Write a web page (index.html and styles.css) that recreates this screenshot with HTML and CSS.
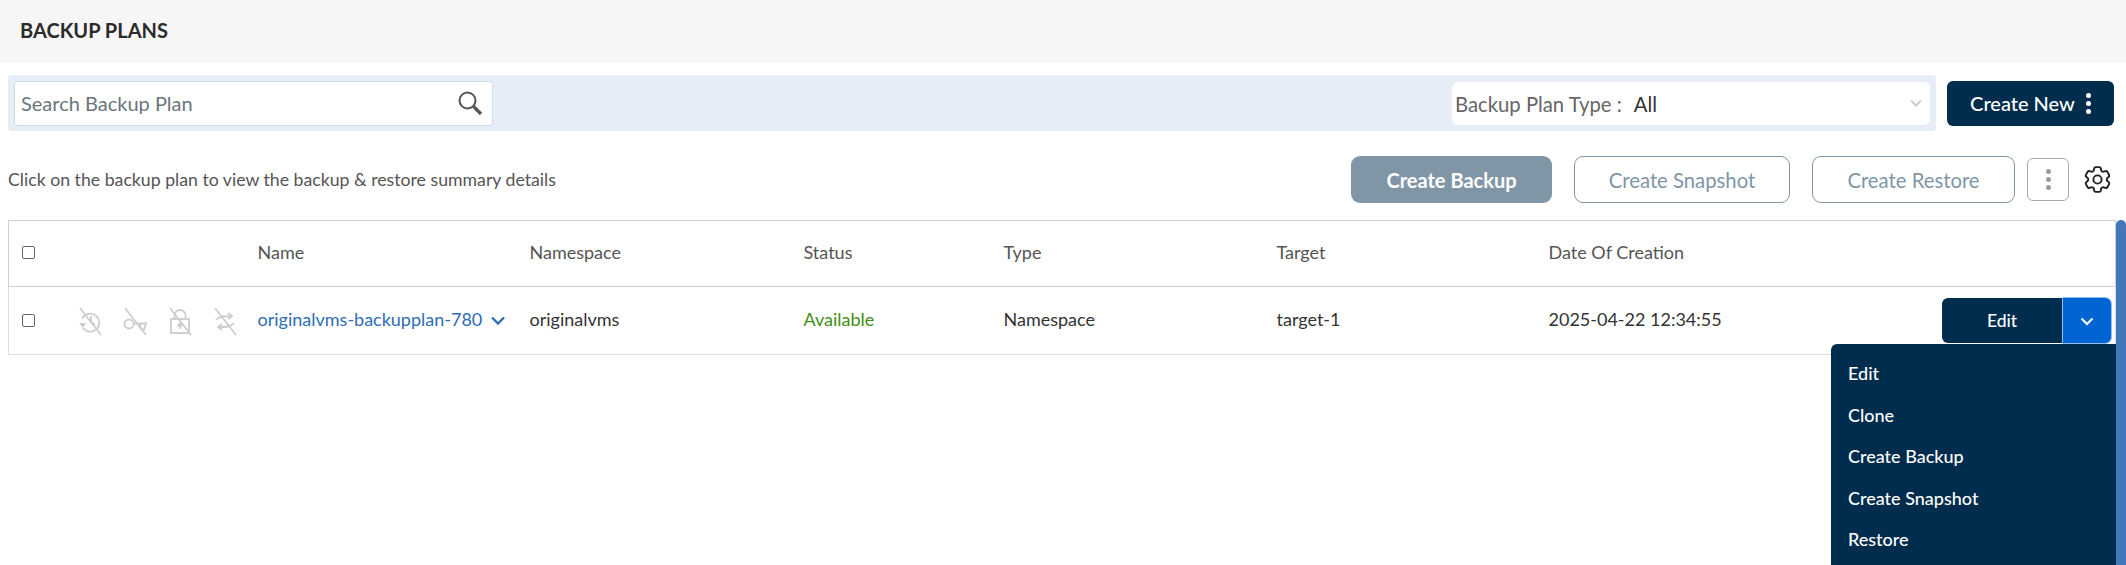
FILE: index.html
```html
<!DOCTYPE html>
<html lang="en">
<head>
    <meta charset="UTF-8">
    <title>Backup Plans</title>
    <link rel="stylesheet" href="styles.css">
</head>
<body>
    <header class="page-header">
        <h1>BACKUP PLANS</h1>
    </header>

    <div class="toolbar">
        <div class="filter-bar">
            <div class="search-box">
                <span>Search Backup Plan</span>
                <svg width="26" height="26" viewBox="0 0 26 26" fill="none" stroke="#555" stroke-width="2">
                    <circle cx="10.5" cy="10.5" r="8"/>
                    <path d="M16.5 16.5l7.5 7.5" stroke-width="3.2"/>
                </svg>
            </div>
            <div class="type-select">
                <span class="type-label">Backup Plan Type :</span>
                <span class="type-value">All</span>
                <svg class="type-arrow" width="14" height="9" viewBox="0 0 14 9" fill="none" stroke="#c9cdd2" stroke-width="2">
                    <path d="M2 1.5l5 5 5-5"/>
                </svg>
            </div>
        </div>
        <button class="btn-create-new">Create New <span class="dots light"><i></i><i></i><i></i></span></button>
    </div>

    <div class="action-row">
        <p class="hint">Click on the backup plan to view the backup &amp; restore summary details</p>
        <div class="actions">
            <button class="btn btn-filled">Create Backup</button>
            <button class="btn btn-outline snapshot">Create Snapshot</button>
            <button class="btn btn-outline restore">Create Restore</button>
            <button class="btn-kebab"><span class="dots"><i></i><i></i><i></i></span></button>
            <svg class="gear" width="33" height="33" viewBox="0 0 24 24" fill="none" stroke="#222" stroke-width="1.4" stroke-linejoin="round">
                <path d="M9.594 3.94c.09-.542.56-.94 1.11-.94h2.593c.55 0 1.02.398 1.11.94l.213 1.281c.063.374.313.686.645.87.074.04.147.083.22.127.324.196.72.257 1.075.124l1.217-.456a1.125 1.125 0 011.37.49l1.296 2.247a1.125 1.125 0 01-.26 1.431l-1.003.827c-.293.24-.438.613-.431.992a6.759 6.759 0 010 .255c-.007.378.138.75.43.99l1.005.828c.424.35.534.954.26 1.43l-1.298 2.247a1.125 1.125 0 01-1.369.491l-1.217-.456c-.355-.133-.75-.072-1.076.124a6.57 6.57 0 01-.22.128c-.331.183-.581.495-.644.869l-.213 1.28c-.09.543-.56.941-1.11.941h-2.594c-.55 0-1.02-.398-1.11-.94l-.213-1.281c-.062-.374-.312-.686-.644-.87a6.52 6.52 0 01-.22-.127c-.325-.196-.72-.257-1.076-.124l-1.217.456a1.125 1.125 0 01-1.369-.49l-1.297-2.247a1.125 1.125 0 01.26-1.431l1.004-.827c.292-.24.437-.613.43-.992a6.932 6.932 0 010-.255c.007-.378-.138-.75-.43-.99l-1.004-.828a1.125 1.125 0 01-.26-1.43l1.297-2.247a1.125 1.125 0 011.37-.491l1.216.456c.356.133.751.072 1.076-.124.072-.044.146-.087.22-.128.332-.183.582-.495.644-.869l.214-1.281z"/>
                <path d="M15 12a3 3 0 11-6 0 3 3 0 016 0z"/>
            </svg>
        </div>
    </div>

    <table class="plans">
        <colgroup>
            <col class="col-check">
            <col class="col-icons">
            <col class="col-name">
            <col class="col-ns">
            <col class="col-status">
            <col class="col-type">
            <col class="col-target">
            <col class="col-date">
            <col>
        </colgroup>
        <thead>
            <tr>
                <th><span class="check"></span></th>
                <th></th>
                <th class="text-cell">Name</th>
                <th class="text-cell">Namespace</th>
                <th class="text-cell">Status</th>
                <th class="text-cell">Type</th>
                <th class="text-cell">Target</th>
                <th class="text-cell">Date Of Creation</th>
                <th></th>
            </tr>
        </thead>
        <tbody>
            <tr>
                <td><span class="check"></span></td>
                <td>
                    <div class="state-icons">
                        <svg width="26" height="30" viewBox="0 0 26 30" fill="none" stroke="#cdcdcd" stroke-width="1.8">
                            <path d="M5 13a9 9 0 1 1 1 9"/>
                            <path d="M2 17l4 5 3-5z" fill="#cdcdcd" stroke="none"/>
                            <path d="M14 10v6l4 3"/>
                            <path d="M3 2l21 27"/>
                        </svg>
                        <svg width="26" height="30" viewBox="0 0 26 30" fill="none" stroke="#cdcdcd" stroke-width="1.8">
                            <circle cx="7" cy="18" r="4.5"/>
                            <path d="M11.5 17.5H24l-2 6h-3l-1-5"/>
                            <path d="M3 2l21 27"/>
                        </svg>
                        <svg width="26" height="30" viewBox="0 0 26 30" fill="none" stroke="#cdcdcd" stroke-width="1.8">
                            <rect x="4" y="13" width="18" height="14"/>
                            <path d="M7.5 13V9.5a5.5 5.5 0 0 1 11 0V13"/>
                            <path d="M13 23v-4M10.5 20l2.5-2.5 2.5 2.5"/>
                            <path d="M3 2l21 27"/>
                        </svg>
                        <svg width="26" height="30" viewBox="0 0 26 30" fill="none" stroke="#cdcdcd" stroke-width="1.8">
                            <path d="M4 14c3-4 9-4 15-4M16 7l4 3-4 3"/>
                            <path d="M22 17c-3 4-9 4-15 4M10 18l-4 3 4 3"/>
                            <path d="M3 2l21 27"/>
                        </svg>
                    </div>
                </td>
                <td class="text-cell">
                    <a class="plan-link">originalvms-backupplan-780
                        <svg width="16" height="10" viewBox="0 0 16 10" fill="none" stroke="#2f6db5" stroke-width="2.4"><path d="M2 1.5l6 6 6-6"/></svg>
                    </a>
                </td>
                <td class="text-cell">originalvms</td>
                <td class="text-cell available">Available</td>
                <td class="text-cell">Namespace</td>
                <td class="text-cell">target-1</td>
                <td class="text-cell">2025-04-22 12:34:55</td>
                <td>
                    <div class="split-btn">
                        <button class="split-main">Edit</button>
                        <button class="split-toggle">
                            <svg width="14" height="9" viewBox="0 0 14 9" fill="none" stroke="#fff" stroke-width="2"><path d="M1.5 1.5l5.5 5.5 5.5-5.5"/></svg>
                        </button>
                    </div>
                </td>
            </tr>
        </tbody>
    </table>

    <ul class="row-menu">
        <li>Edit</li>
        <li>Clone</li>
        <li>Create Backup</li>
        <li>Create Snapshot</li>
        <li>Restore</li>
    </ul>

    <div class="scroll-thumb"></div>
</body>
</html>
```

FILE: styles.css
```css
html, body {
    height: 100%;
    overflow: hidden;
}
body {
    margin: 0;
    font-family: Lato, "Open Sans", sans-serif;
    color: #333;
    background: #fff;
    position: relative;
}
button {
    font-family: inherit;
    cursor: pointer;
}
.page-header {
    height: 63px;
    box-sizing: border-box;
    background: #f6f6f6;
    display: flex;
    align-items: center;
    padding: 0 0 3px 20px;
}
.page-header h1 {
    margin: 0;
    font-size: 20px;
    font-weight: 700;
    color: #2b2b2b;
}
.toolbar {
    display: flex;
    align-items: center;
    margin: 12px 12px 0 8px;
    gap: 11px;
}
.filter-bar {
    flex: 1;
    height: 56px;
    background: #e6edf7;
    border-radius: 3px;
    display: flex;
    align-items: center;
    justify-content: space-between;
    padding: 0 6px 0 6px;
}
.search-box {
    width: 479px;
    height: 45px;
    box-sizing: border-box;
    background: #fff;
    border: 1px solid #cfdcee;
    border-radius: 3px;
    display: flex;
    align-items: center;
    justify-content: space-between;
    padding: 0 9px 0 6px;
    font-size: 20px;
    color: #6c757d;
}
.type-select {
    width: 478px;
    height: 43px;
    box-sizing: border-box;
    background: #fff;
    border-radius: 6px;
    display: flex;
    align-items: center;
    padding: 1px 7px 0 3px;
    font-size: 20.3px;
}
.type-label {
    color: #666;
}
.type-value {
    margin-left: 12px;
    color: #333;
    flex: 1;
}
.btn-create-new {
    width: 167px;
    height: 45px;
    background: #002d4d;
    color: #fff;
    border: none;
    border-radius: 6px;
    font-size: 20px;
    font-weight: 500;
    display: flex;
    align-items: center;
    justify-content: center;
    gap: 11px;
    padding: 0;
}
.dots {
    display: inline-flex;
    flex-direction: column;
    gap: 3px;
}
.dots i {
    width: 5px;
    height: 5px;
    border-radius: 50%;
    background: #9a9a9a;
}
.dots.light i {
    background: #fff;
}
.action-row {
    display: flex;
    align-items: center;
    justify-content: space-between;
    margin: 25px 12px 0 8px;
    height: 47px;
}
.hint {
    margin: 0;
    font-size: 17.7px;
    color: #555;
}
.actions {
    display: flex;
    align-items: center;
}
.btn {
    height: 47px;
    border-radius: 9px;
    font-size: 20.3px;
    padding: 0;
}
.btn-filled {
    width: 201px;
    background: #8096a7;
    border: none;
    color: #fff;
    font-size: 20px;
    font-weight: 700;
}
.btn-outline {
    background: #fff;
    border: 1px solid #8096a7;
    color: #8096a7;
}
.snapshot {
    width: 216px;
    margin-left: 22px;
}
.restore {
    width: 203px;
    margin-left: 22px;
}
.btn-kebab {
    width: 42px;
    height: 43px;
    margin-left: 12px;
    background: #fff;
    border: 1px solid #aaa;
    border-radius: 6px;
    display: flex;
    align-items: center;
    justify-content: center;
    padding: 0;
}
.gear {
    margin-left: 12px;
}
.plans {
    width: 2108px;
    margin: 17px 0 0 8px;
    border-collapse: collapse;
    table-layout: fixed;
    font-size: 18px;
}
.plans th, .plans td {
    padding: 0;
    text-align: left;
    font-weight: 400;
}
.plans th {
    padding-bottom: 2px;
}
.plans .text-cell {
    padding-bottom: 3px;
}
.plans th.text-cell {
    padding-bottom: 4px;
}
.plans thead tr {
    height: 66px;
    border: 1px solid #cfcfcf;
    color: #555;
}
.plans tbody tr {
    height: 68px;
    border: 1px solid #dedede;
    color: #333;
}
.col-check { width: 60px; }
.col-icons { width: 189px; }
.col-name { width: 272px; }
.col-ns { width: 274px; }
.col-status { width: 200px; }
.col-type { width: 273px; }
.col-target { width: 272px; }
.col-date { width: 393px; }
.check {
    display: block;
    width: 11px;
    height: 11px;
    margin-left: 13px;
    border: 1px solid #666;
    border-radius: 2px;
}
.state-icons {
    display: flex;
    gap: 19px;
    margin-left: 8px;
}
.plan-link {
    color: #2f6db5;
    white-space: nowrap;
}
.plan-link svg {
    margin-left: 3px;
}
.available {
    color: #3f8f12;
}
.split-btn {
    display: flex;
    width: 169px;
    height: 45px;
    margin-left: 0;
}
.split-main {
    flex: 1;
    background: #002d4d;
    color: #fff;
    border: none;
    border-radius: 6px 0 0 6px;
    font-size: 17.5px;
    font-weight: 500;
}
.split-toggle {
    width: 48px;
    background: #0064d2;
    border: none;
    border-radius: 0 6px 6px 0;
    box-shadow: 0 0 0 1px #8fc0f5;
    padding: 0;
}
.row-menu {
    position: absolute;
    left: 1831px;
    top: 344px;
    width: 285px;
    height: 221px;
    box-sizing: border-box;
    margin: 0;
    padding: 9px 0 0 17px;
    list-style: none;
    background: #002d4d;
    border-radius: 6px 0 0 0;
    color: #fff;
    font-size: 18px;
    font-weight: 500;
}
.row-menu li {
    height: 41.5px;
    line-height: 41.5px;
}
.scroll-thumb {
    position: absolute;
    right: 0;
    top: 220px;
    bottom: 0;
    width: 10px;
    background: #4277bd;
    border-radius: 5px 5px 0 0;
}
```
